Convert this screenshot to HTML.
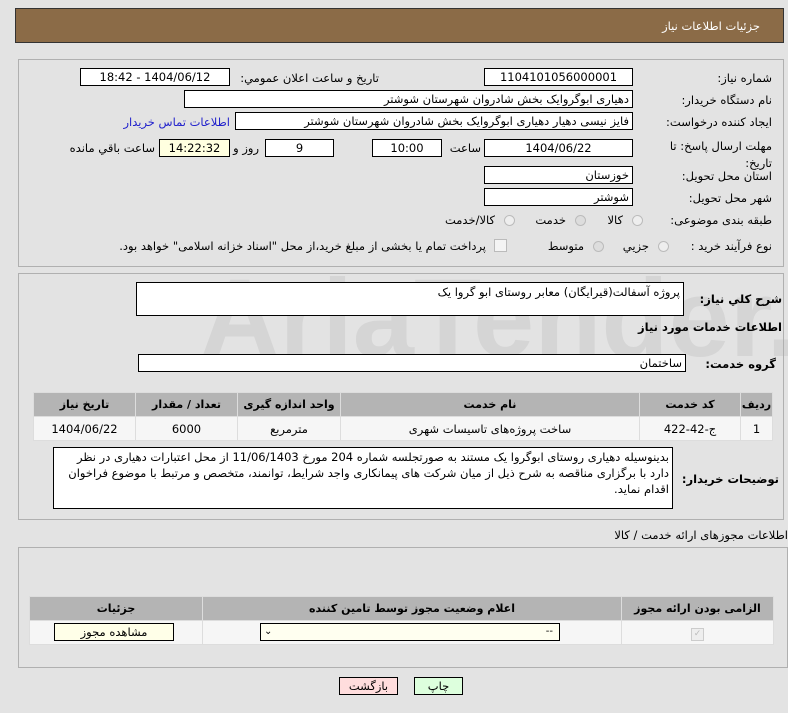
<!DOCTYPE html>
<html><head><meta charset="utf-8"><style>
body{margin:0;width:788px;height:713px;background:#e3e3e3;font-family:"DejaVu Sans","Liberation Sans",sans-serif;font-size:11px;color:#000;position:relative;overflow:hidden}
.a{position:absolute;white-space:nowrap}
.r{direction:rtl;text-align:right}
.in{position:absolute;background:#fff;border:1px solid #000;box-sizing:border-box;direction:rtl;font-size:11.5px;line-height:16px;padding:0 3px;white-space:nowrap;overflow:hidden}
.c{text-align:center}
.panel{position:absolute;border:1px solid #b0b0b0;box-sizing:border-box}
.rad{position:absolute;width:11px;height:11px;border-radius:50%;border:1px solid #bbb;background:#eee;box-sizing:border-box}
.lab{position:absolute;direction:rtl;text-align:right;font-size:11.5px;white-space:nowrap}
table{border-collapse:collapse;position:absolute}
td,th{border:1px solid #ddd;text-align:center;font-size:11.5px;padding:0}
th{background:#b4b4b4;font-weight:bold;font-size:11px}
td{background:#f6f6f6}
</style></head><body>
<div class="a" style="left:15px;top:8px;width:769px;height:35px;background:#8b6b47;border:1px solid #333;box-sizing:border-box"></div>
<div class="a r" style="right:28px;top:19px;color:#fff;font-size:11.5px">جزئیات اطلاعات نیاز</div>

<div class="a" style="left:200px;top:255px;font-size:110px;font-weight:bold;color:rgba(150,150,150,0.18);font-family:'Liberation Sans',sans-serif">AriaTender.neT</div>

<div class="panel" style="left:18px;top:59px;width:766px;height:208px"></div>
<div class="lab" style="right:16px;top:71px">شماره نیاز:</div>
<div class="in c" style="left:484px;top:68px;width:149px;height:18px">1104101056000001</div>
<div class="lab" style="right:409px;top:71px">تاریخ و ساعت اعلان عمومي:</div>
<div class="in c" style="left:80px;top:68px;width:150px;height:18px">1404/06/12 - 18:42</div>
<div class="lab" style="right:16px;top:93px">نام دستگاه خریدار:</div>
<div class="in" style="left:184px;top:90px;width:449px;height:18px">دهیاری ابوگروایک بخش شادروان شهرستان شوشتر</div>
<div class="lab" style="right:16px;top:115px">ایجاد کننده درخواست:</div>
<div class="in" style="left:235px;top:112px;width:398px;height:18px">فایز نیسی دهیار دهیاری ابوگروایک بخش شادروان شهرستان شوشتر</div>
<div class="lab" style="right:558px;top:115px;color:#2222cc">اطلاعات تماس خریدار</div>
<div class="lab" style="right:16px;top:139px">مهلت ارسال پاسخ: تا</div>
<div class="lab" style="right:16px;top:156px">تاریخ:</div>
<div class="in c" style="left:484px;top:139px;width:149px;height:18px">1404/06/22</div>
<div class="lab" style="right:307px;top:141px">ساعت</div>
<div class="in c" style="left:372px;top:139px;width:70px;height:18px">10:00</div>
<div class="in c" style="left:265px;top:139px;width:69px;height:18px">9</div>
<div class="lab" style="right:529px;top:141px">روز و</div>
<div class="in c" style="left:159px;top:139px;width:71px;height:18px;background:#ffffe0">14:22:32</div>
<div class="lab" style="right:633px;top:141px">ساعت باقي مانده</div>
<div class="lab" style="right:16px;top:169px">استان محل تحویل:</div>
<div class="in" style="left:484px;top:166px;width:149px;height:18px">خوزستان</div>
<div class="lab" style="right:16px;top:191px">شهر محل تحویل:</div>
<div class="in" style="left:484px;top:188px;width:149px;height:18px">شوشتر</div>
<div class="lab" style="right:16px;top:213px">طبقه بندی موضوعی:</div>
<div class="rad" style="left:632px;top:215px"></div><div class="lab" style="right:165px;top:213px">کالا</div>
<div class="rad" style="left:575px;top:215px;background:#ddd"></div><div class="lab" style="right:222px;top:213px">خدمت</div>
<div class="rad" style="left:504px;top:215px"></div><div class="lab" style="right:293px;top:213px">کالا/خدمت</div>
<div class="lab" style="right:16px;top:239px">نوع فرآیند خرید :</div>
<div class="rad" style="left:658px;top:241px"></div><div class="lab" style="right:139px;top:239px">جزیي</div>
<div class="rad" style="left:593px;top:241px;background:#ddd"></div><div class="lab" style="right:204px;top:239px">متوسط</div>
<div class="a" style="left:494px;top:239px;width:11px;height:11px;border:1px solid #bbb;background:#f4f4f4"></div>
<div class="lab" style="right:302px;top:239px">پرداخت تمام یا بخشی از مبلغ خرید،از محل "اسناد خزانه اسلامی" خواهد بود.</div>

<div class="panel" style="left:18px;top:273px;width:766px;height:247px"></div>
<div class="lab" style="right:6px;top:292px;font-weight:bold">شرح کلي نیاز:</div>
<div class="in" style="left:136px;top:282px;width:548px;height:34px;line-height:18px">پروژه آسفالت(قیرایگان) معابر روستای ابو گروا یک</div>
<div class="lab" style="right:6px;top:320px;font-weight:bold">اطلاعات خدمات مورد نیاز</div>
<div class="lab" style="right:12px;top:357px;font-weight:bold">گروه خدمت:</div>
<div class="in" style="left:138px;top:354px;width:548px;height:18px">ساختمان</div>
<table style="left:33px;top:392px;width:740px;direction:rtl">
<tr style="height:24px"><th style="width:31px">ردیف</th><th style="width:100px">کد خدمت</th><th style="width:298px">نام خدمت</th><th style="width:102px">واحد اندازه گیری</th><th style="width:101px">تعداد / مقدار</th><th>تاریخ نیاز</th></tr>
<tr style="height:24px"><td>1</td><td>ج-42-422</td><td>ساخت پروژه‌های تاسیسات شهری</td><td>مترمربع</td><td>6000</td><td>1404/06/22</td></tr>
</table>
<div class="lab" style="right:9px;top:472px;font-weight:bold">توضیحات خریدار:</div>
<div class="in" style="left:53px;top:447px;width:620px;height:62px;white-space:normal;line-height:16px;padding-top:1px;font-size:11.5px">بدینوسیله دهیاری روستای ابوگروا یک مستند به صورتجلسه شماره 204 مورخ 11/06/1403 از محل اعتبارات دهیاری در نظر دارد با برگزاری مناقصه به شرح ذیل از میان شرکت های پیمانکاری واجد شرایط، توانمند، متخصص و مرتبط با موضوع فراخوان اقدام نماید.</div>

<div class="lab" style="right:0px;top:528px">اطلاعات مجوزهای ارائه خدمت / کالا</div>
<div class="panel" style="left:18px;top:547px;width:770px;height:121px"></div>
<table style="left:29px;top:596px;width:745px;direction:rtl">
<tr style="height:24px"><th style="width:151px">الزامی بودن ارائه مجوز</th><th style="width:418px">اعلام وضعیت مجوز توسط تامین کننده</th><th>جزئیات</th></tr>
<tr style="height:24px"><td><span style="display:inline-block;width:11px;height:11px;border:1px solid #ccc;background:#eee;color:#bbb;font-size:9px;line-height:11px">✓</span></td><td></td><td></td></tr>
</table>
<div class="in" style="left:260px;top:623px;width:300px;height:18px;background:#fffff0;direction:ltr;font-size:10px"><span style="position:absolute;left:3px">⌄</span><span style="position:absolute;right:6px">--</span></div>
<div class="in c" style="left:54px;top:623px;width:120px;height:18px;background:#ffffe8">مشاهده مجوز</div>

<div class="in c" style="left:339px;top:677px;width:59px;height:18px;background:#fdd">بازگشت</div>
<div class="in c" style="left:414px;top:677px;width:49px;height:18px;background:#dfd">چاپ</div>
</body></html>
